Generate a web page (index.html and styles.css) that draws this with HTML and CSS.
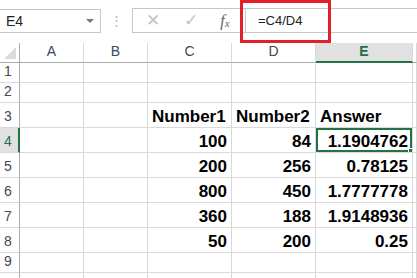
FILE: index.html
```html
<!DOCTYPE html>
<html lang="en">
<head>
    <meta charset="UTF-8">
    <title>Sheet</title>
    <link rel="stylesheet" href="styles.css">
</head>
<body>
    <div class="toolbar">
        <div class="namebox">
            <span>E4</span>
            <span class="arrow"></span>
        </div>
        <div class="grip">&#8942;</div>
        <div class="fbar">
            <span class="btn cancel">&#10005;</span>
            <span class="btn enter">&#10003;</span>
            <span class="btn fx">f<sub>x</sub></span>
            <div class="input">=C4/D4</div>
            <div class="mark"></div>
        </div>
    </div>

    <div class="sheet">
        <div class="hd corner"><div class="tri"></div></div>
        <div class="hd col">A</div>
        <div class="hd col">B</div>
        <div class="hd col">C</div>
        <div class="hd col">D</div>
        <div class="hd col sel">E</div>
        <div class="hd col"></div>

        <div class="hd row">1</div><div class="c"></div><div class="c"></div><div class="c"></div><div class="c"></div><div class="c"></div><div class="c"></div>
        <div class="hd row">2</div><div class="c"></div><div class="c"></div><div class="c"></div><div class="c"></div><div class="c"></div><div class="c"></div>

        <div class="hd row">3</div><div class="c"></div><div class="c"></div>
        <div class="c b">Number1</div><div class="c b">Number2</div><div class="c b">Answer</div><div class="c"></div>

        <div class="hd row rsel">4</div><div class="c"></div><div class="c"></div>
        <div class="c b n">100</div><div class="c b n">84</div><div class="c b n active">1.1904762</div><div class="c"></div>

        <div class="hd row">5</div><div class="c"></div><div class="c"></div>
        <div class="c b n">200</div><div class="c b n">256</div><div class="c b n">0.78125</div><div class="c"></div>

        <div class="hd row">6</div><div class="c"></div><div class="c"></div>
        <div class="c b n">800</div><div class="c b n">450</div><div class="c b n">1.7777778</div><div class="c"></div>

        <div class="hd row">7</div><div class="c"></div><div class="c"></div>
        <div class="c b n">360</div><div class="c b n">188</div><div class="c b n">1.9148936</div><div class="c"></div>

        <div class="hd row">8</div><div class="c"></div><div class="c"></div>
        <div class="c b n">50</div><div class="c b n">200</div><div class="c b n">0.25</div><div class="c"></div>

        <div class="hd row">9</div><div class="c"></div><div class="c"></div><div class="c"></div><div class="c"></div><div class="c"></div><div class="c"></div>
        <div class="hd row"></div><div class="c"></div><div class="c"></div><div class="c"></div><div class="c"></div><div class="c"></div><div class="c"></div>
    </div>
</body>
</html>
```

FILE: styles.css
```css
body{
    margin: 0;
    font-family: "Liberation Sans", Arial, sans-serif;
    background: #fff;
    overflow: hidden;
}
.toolbar{
    height: 43px;
    display: flex;
    align-items: flex-start;
    padding-top: 9px;
    box-sizing: border-box;
}
.namebox{
    width: 101px;
    height: 24px;
    box-sizing: border-box;
    border: 1px solid #c6c6c6;
    border-left: none;
    display: flex;
    align-items: center;
    justify-content: space-between;
    padding: 0 6px 0 6px;
    font-size: 14px;
    color: #222;
}
.arrow{
    width: 0;
    height: 0;
    border-left: 4px solid transparent;
    border-right: 4px solid transparent;
    border-top: 4px solid #777;
}
.grip{
    width: 31px;
    text-align: center;
    color: #b4b4b4;
    font-size: 13px;
    line-height: 24px;
}
.fbar{
    flex: 1;
    height: 25px;
    margin-top: -1px;
    box-sizing: border-box;
    border: 1px solid #c6c6c6;
    border-right: none;
    display: flex;
    align-items: center;
    position: relative;
}
.btn{
    color: #c4c4c4;
    font-size: 16px;
    text-align: center;
}
.cancel{
    width: 36px;
    margin-left: 2px;
    font-size: 17px;
}
.enter{
    width: 40px;
    font-size: 17px;
}
.fx{
    width: 28px;
    font-family: "Liberation Serif", serif;
    font-style: italic;
    color: #666;
    font-size: 16px;
}
.fx sub{
    font-size: 11px;
    vertical-align: -1px;
}
.input{
    align-self: stretch;
    flex: 1;
    border-left: 1px solid #c6c6c6;
    margin-left: 6px;
    padding-left: 12px;
    font-size: 13px;
    line-height: 23px;
    color: #222;
}
.mark{
    position: absolute;
    left: 107px;
    top: -9px;
    width: 91px;
    height: 43px;
    box-sizing: border-box;
    border: 3px solid #e2202a;
}

.sheet{
    display: grid;
    grid-template-columns: 20px 64px 64px 84px 84px 97px 1fr;
    grid-template-rows: 20px 20px 20px 25px 25px 25px 25px 25px 25px 20px 20px;
}
.c, .hd{
    box-sizing: border-box;
    border-right: 1px solid #d9d9d9;
    border-bottom: 1px solid #d9d9d9;
    display: flex;
    align-items: flex-end;
    overflow: hidden;
    white-space: nowrap;
}
.hd{
    font-size: 14px;
    color: #3c4a5c;
    line-height: 14px;
    padding-bottom: 4px;
}
.col{
    justify-content: center;
    border-bottom-color: #ababab;
}
.row{
    padding-left: 4px;
    border-right-color: #ababab;
}
.corner{
    border-bottom-color: #ababab;
    border-right-color: #ababab;
    align-items: flex-end;
    justify-content: flex-end;
    padding: 0 3px 3px 0;
}
.tri{
    width: 0;
    height: 0;
    border-left: 12px solid transparent;
    border-bottom: 12px solid #dcdcdc;
}
.sel{
    background: #e1e1e1;
    color: #217346;
    font-weight: bold;
    border-bottom: 2px solid #217346;
    padding-bottom: 3px;
}
.rsel{
    background: #e1e1e1;
    color: #217346;
    border-right: 2px solid #217346;
}
.b{
    font-weight: bold;
    font-size: 17px;
    line-height: 17px;
    color: #000;
    padding: 0 4px 2px 4px;
}
.n{
    justify-content: flex-end;
}
.active{
    position: relative;
    box-shadow: inset 0 0 0 2px #217346;
}
.active::after{
    content: "";
    position: absolute;
    right: -3px;
    bottom: -3px;
    width: 5px;
    height: 5px;
    background: #217346;
    border: 1px solid #fff;
}
```
